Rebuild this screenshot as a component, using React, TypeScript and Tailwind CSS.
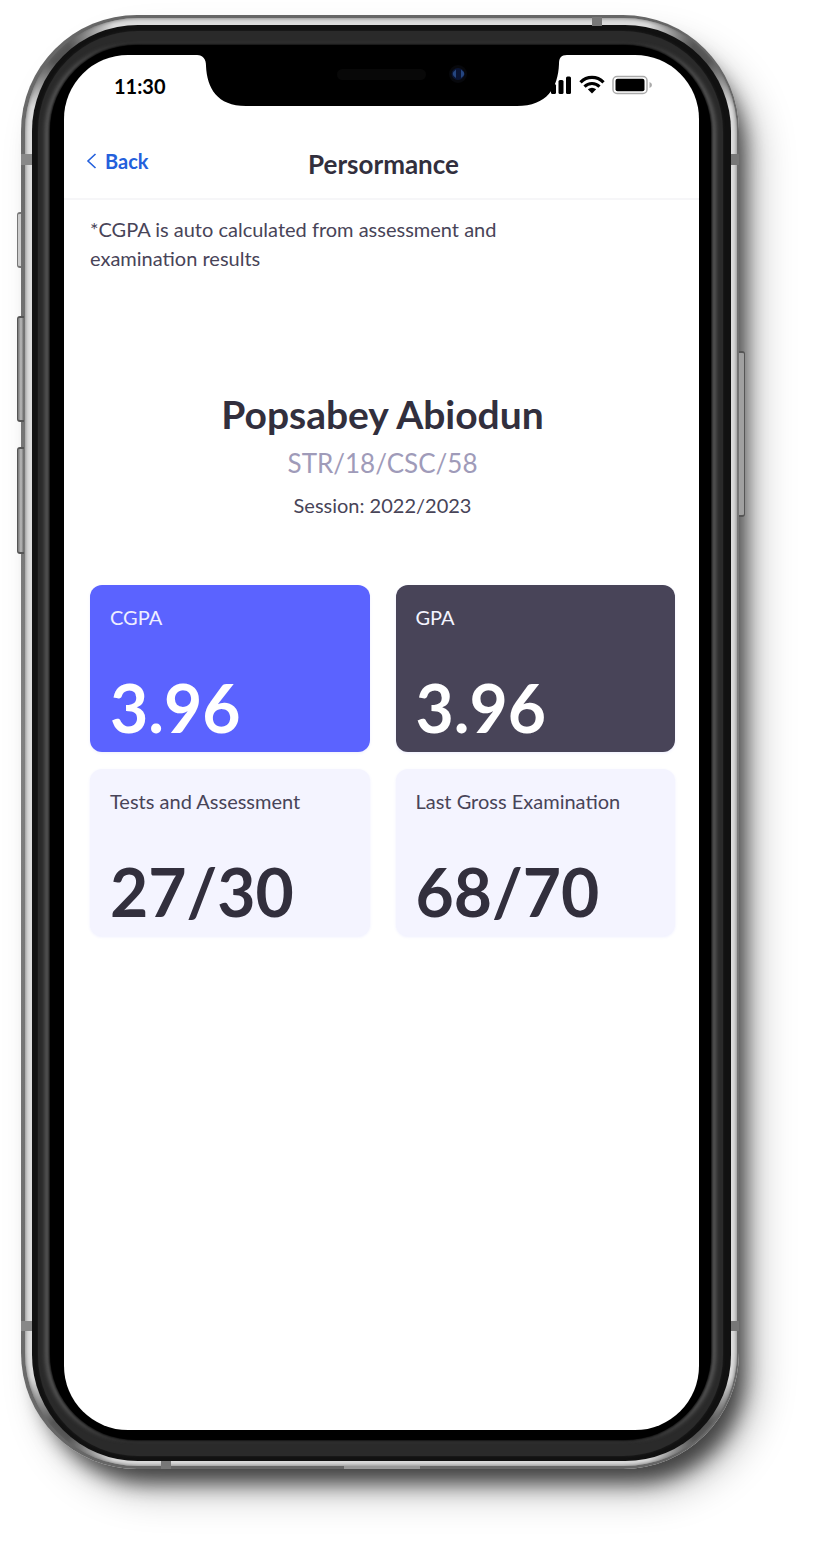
import React from "react";

type Stat = { label: string; value: string; box: string; labelColor: string; valueColor: string };

const stats: Stat[] = [
  { label: "CGPA", value: "3.96", box: "bg-[#5b63ff]", labelColor: "text-[#eeeeff]", valueColor: "text-white" },
  { label: "GPA", value: "3.96", box: "bg-[#484458]", labelColor: "text-[#f4f4ff]", valueColor: "text-white" },
  { label: "Tests and Assessment", value: "27/30", box: "bg-[#f4f4ff]", labelColor: "text-[#484458]", valueColor: "text-[#322f3d]" },
  { label: "Last Gross Examination", value: "68/70", box: "bg-[#f4f4ff]", labelColor: "text-[#484458]", valueColor: "text-[#322f3d]" },
];

function StatCard({ stat }: { stat: Stat }) {
  return (
    <div className={`flex h-[167px] flex-col justify-between rounded-xl px-5 pt-[18px] pb-[6px] shadow-[0_1px_3px_rgba(91,99,255,0.1)] ${stat.box}`}>
      <dt className={`text-[20px] leading-7 ${stat.labelColor}`}>{stat.label}</dt>
      <dd className={`text-[66px] leading-[76px] font-bold ${stat.valueColor}`}>{stat.value}</dd>
    </div>
  );
}

function Notch() {
  return (
    <svg aria-hidden="true" className="absolute top-0 left-1/2 -translate-x-1/2" width="370" height="52" viewBox="0 0 370 52">
      <path d="M0 0H370C364 0 362 3 362 9C361 33 350 51 320 51H49C20 51 10 33 9 11C9 4 6 0 0 0Z" fill="#000" />
      <rect x="140" y="14" width="89" height="11" rx="5.5" fill="#080808" />
      <circle cx="261" cy="19" r="9" fill="#07080c" />
      <ellipse cx="261" cy="19" rx="6.500" ry="6" fill="#0a1433" />
      <path d="M259 14.500Q252.500 19 259 23Z" fill="#24457f" />
      <path d="M264 14.500Q270.500 19 264 23Z" fill="#24457f" />
    </svg>
  );
}

function StatusIcons() {
  return (
    <svg aria-label="Signal, Wi-Fi and battery" role="img" width="112" height="24" viewBox="0 0 112 24">
      <rect x="0" y="14" width="5" height="6" rx="1.500" />
      <rect x="7" y="10" width="5" height="10" rx="1.500" />
      <rect x="14.500" y="6" width="5" height="14" rx="1.500" />
      <rect x="22" y="2.500" width="5" height="17.500" rx="1.500" />
      <g fill="none" stroke="#000">
        <path d="M36.500 8.300C43 1.800 53 1.800 59.500 8.300" strokeWidth="3.300" />
        <path d="M40.500 12.600C44.500 8.400 51.500 8.400 55.500 12.600" strokeWidth="3" />
      </g>
      <path d="M43.800 15.300Q48 12.300 52.200 15.300L48 19.400Z" />
      <rect x="69" y="2.500" width="34" height="17" rx="4" fill="none" stroke="#aaa" strokeWidth="1.500" />
      <rect x="71.500" y="4.800" width="29" height="12.500" rx="2" />
      <path d="M105.500 8Q108 9 108 11T105.500 14Z" fill="#aaa" />
    </svg>
  );
}

function Hardware() {
  const leftKey = "absolute -left-1 w-[7px] rounded-l-[3px] border-y-2 border-l border-[#555] bg-linear-to-r from-[#777] via-[#bbb] to-[#666]";
  return (
    <div aria-hidden="true">
      <i className="absolute top-[197px] -left-1 h-[56px] w-1 rounded-l-[3px] border-y-2 border-l border-[#777] bg-[#ccc]" />
      <i className={`${leftKey} top-[301px] h-[106px]`} />
      <i className={`${leftKey} top-[432px] h-[107px]`} />
      <i className="absolute top-[336px] -right-1.5 h-[166px] w-[6px] rounded-r-[3px] border-y-2 border-r border-[#555] bg-[#a0a0a0]" />
      <i className="absolute top-[139px] left-0 h-[11px] w-[11px] bg-[#888]" />
      <i className="absolute top-[139px] right-0 h-[11px] w-2 bg-[#777]" />
      <i className="absolute bottom-[138px] left-0 h-[10px] w-[11px] bg-[#888]" />
      <i className="absolute right-0 bottom-[138px] h-[10px] w-2 bg-[#777]" />
      <i className="absolute top-[2px] right-[137px] h-[9px] w-[10px] bg-[#777]" />
      <i className="absolute bottom-0 left-[140px] h-2 w-[10px] bg-[#777]" />
      <i className="absolute bottom-0 left-[323px] h-[3px] w-[76px] bg-[#999]" />
    </div>
  );
}

export default function App() {
  return (
    <div className="flex min-h-screen bg-white pt-[15px] pr-[81px] pb-[82px] pl-[21px] font-['Lato','Liberation_Sans',sans-serif]">
      <div className="relative flex flex-1 rounded-[116px] bg-linear-to-b from-[#666] via-[#808080] to-[#666] pt-[3px] pr-[2px] pb-[3px] pl-[4px] shadow-[12px_20px_20px_-6px_rgba(0,0,0,0.65),20px_26px_40px_-4px_rgba(0,0,0,0.28)]">
        <div className="flex flex-1 rounded-[113px] bg-[#dcdcdc] bg-[radial-gradient(circle_at_32px_32px,#555_12px,transparent_62px),radial-gradient(circle_at_calc(100%-32px)_32px,#555_12px,transparent_62px),radial-gradient(circle_at_32px_calc(100%-32px),#555_12px,transparent_62px),radial-gradient(circle_at_calc(100%-32px)_calc(100%-32px),#555_12px,transparent_62px)] pt-[7px] pr-[6px] pb-[5px] pl-[7px] shadow-[inset_0_0_4px_#666]">
          <div className="flex flex-1 rounded-[106px] bg-[#111] pt-[6px] pr-[8px] pb-[5px] pl-[6px]">
            <div className="flex flex-1 rounded-[100px] bg-[#2a2a2a] px-[12px] pt-[14px] pb-[16px] shadow-[0_0_3px_#222]">
              <div className="flex flex-1 rounded-[86px] bg-black pt-[10px] pr-[12px] pb-[10px] pl-[14px] shadow-[0_0_3px_1px_#000,-5px_0_4px_#5c5c5c,5px_0_4px_#5c5c5c]">
                <div className="relative flex flex-1 flex-col overflow-hidden rounded-[64px] bg-white">
                  <div className="flex h-[62px] items-center justify-between pr-[43px] pl-[50px]">
                    <time className="text-[20px] leading-6 font-bold text-black">11:30</time>
                    <StatusIcons />
                  </div>
                  <Notch />
                  <header className="grid h-[83px] grid-cols-[1fr_auto_1fr] items-center border-b-2 border-[#f6f6f8] pt-3 pl-1">
                    <a href="#back" className="flex items-center gap-2 pb-1.5 pl-[18px] text-[20px] leading-6 font-bold text-[#2460dc]">
                      <svg aria-hidden="true" width="11" height="16" viewBox="0 0 11 16" fill="none" stroke="currentColor" strokeWidth="1.600">
                        <path d="M9.500 1L2 8L9.500 15" />
                      </svg>
                      Back
                    </a>
                    <h1 className="text-[26px] leading-8 font-bold text-[#322f3d]">Persormance</h1>
                  </header>
                  <main className="flex-1 pt-[15px] pr-6 pb-10 pl-[26px] text-[#484458]">
                    <p className="max-w-[420px] text-[20px] leading-[29px]">*CGPA is auto calculated from assessment and examination results</p>
                    <section className="pt-[116px] text-center">
                      <h2 className="text-[39px] leading-[50px] font-bold text-[#322f3d]">Popsabey Abiodun</h2>
                      <p className="pt-1.5 text-[26px] leading-9 text-[#9f9bb9]">STR/18/CSC/58</p>
                      <p className="pt-2.5 text-[20px] leading-7">Session: 2022/2023</p>
                    </section>
                    <dl className="grid grid-cols-2 gap-x-[26px] gap-y-[17px] pt-[66px]">
                      {stats.map((s) => (
                        <StatCard key={s.label} stat={s} />
                      ))}
                    </dl>
                  </main>
                </div>
              </div>
            </div>
          </div>
        </div>
        <Hardware />
      </div>
    </div>
  );
}
